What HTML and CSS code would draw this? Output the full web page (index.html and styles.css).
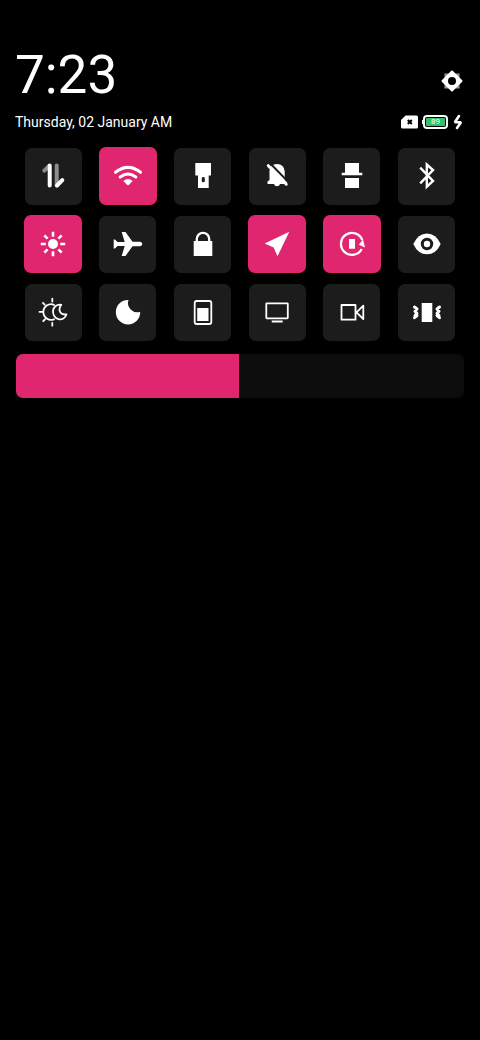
FILE: index.html
```html
<!DOCTYPE html>
<html lang="en">
<head>
<meta charset="utf-8">
<meta name="viewport" content="width=device-width, initial-scale=1">
<title>Control center</title>
<link rel="stylesheet" href="styles.css">
</head>
<body>
<main class="panel">
  <header class="header">
    <div class="row">
      <time class="clock">7:23</time>
      <button class="settings" type="button" aria-label="Settings">
        <svg viewBox="-11 -11 22 22"><path class="dim" d="M-7.500-7.500h15v15h-15z"/><path class="solid round" d="M0-9.500 9.500 0 0 9.500-9.500 0z"/><circle class="hole" r="4"/></svg>
      </button>
    </div>
    <div class="row">
      <span class="date">Thursday, 02 January AM</span>
      <div class="status">
        <svg class="sim" viewBox="0 0 17 14" role="img" aria-label="No SIM"><path class="solid" d="M4.500 0.500H15.500Q17 .5 17 2V12Q17 13.500 15.500 13.500H1.500Q0 13.500 0 12V5z"/><path class="cross" d="m6.800 5 4 4m0-4-4 4"/></svg>
        <span class="battery"><span class="charge">89</span></span>
        <svg class="bolt" viewBox="0 0 10 16" role="img" aria-label="Charging"><path d="M6 2 1.800 8.300H8L4 14"/></svg>
      </div>
    </div>
  </header>

  <section class="tiles" aria-label="Quick settings">
    <button class="tile" type="button" aria-label="Mobile data"><svg viewBox="-20 -20 40 40"><path class="line thick faded" d="M-8.700-5.300-4-10M3.700-10.500V9.500"/><path class="line thick" d="M-3.300-10.500V9.500M4 9.500 9.300 4.200"/></svg></button>
    <button class="tile on" type="button" aria-pressed="true" aria-label="Wi-Fi"><svg viewBox="-20 -20 40 40"><path class="line wifi" d="M-12.500-3.700Q0-13.500 12.500-3.700M-7.800 1Q0-5 7.800 1"/><path class="solid" d="M-4.700 5Q0 1 4.700 5L.7 9Q0 9.500-.7 9z"/></svg></button>
    <button class="tile" type="button" aria-label="Flashlight"><svg viewBox="-20 -20 40 40"><path class="solid" fill-rule="evenodd" d="M-7.700-13H8V-.5H5.700V12H-5V-.5H-7.700zM-1.200 2V5Q-1.200 6.300.3 6.300T1.800 5V2Q1.800 1 .3 1T-1.200 2z"/></svg></button>
    <button class="tile" type="button" aria-label="Silent mode"><svg viewBox="-20 -20 40 40"><path class="solid" d="M-7.500 4V-5Q-7-12 0-12T7.700-4.500V4L10 6V8H3Q2.500 10.200 0 10.200T-3 8H-9.500V5.500z"/><path class="cut" d="M-6.500-12.200 12 6.600"/><path class="line bar" d="M-8.700-10.300 9.300 8.200"/></svg></button>
    <button class="tile" type="button" aria-label="Incognito"><svg viewBox="-20 -20 40 40"><path class="solid" d="M-7-13H7V-3.300H10.300V-.7H-10.300V-3.300H-7zM-7 2H7V12H-7z"/></svg></button>
    <button class="tile" type="button" aria-label="Bluetooth"><svg viewBox="-20 -20 40 40"><path class="line sharp" d="M-6.800-8.300 6 5-.2 10.700V-11.500L6-6-6.800 7.300"/></svg></button>

    <button class="tile on" type="button" aria-pressed="true" aria-label="Auto brightness"><svg viewBox="-20 -20 40 40"><circle class="solid" r="5"/><path class="rays" d="M0-12.200V-7.200M0 7.200V12.200M-12.200 0H-7.200M7.200 0H12.200M-8.700-8.700-5.400-5.400M8.700-8.700 5.400-5.400M-8.700 8.700-5.400 5.400M8.700 8.700 5.400 5.400"/></svg></button>
    <button class="tile" type="button" aria-label="Airplane mode"><svg viewBox="-20 -20 40 40"><path class="solid" d="M-14.300-4.500H-13L-10.500-2H-3.300L-6.300-12H-2.500L4.500-2.300H12Q14.300-2 14.300 0T12 2.300H4.500L-2.500 12H-6.300L-3.300 2H-10.500L-13 4.500H-14.300z"/></svg></button>
    <button class="tile" type="button" aria-label="Lock screen"><svg viewBox="-20 -20 40 40"><path class="solid" d="M-9.300-3H9.300V12H-9.300z"/><path class="line medium" d="M-6.200-3V-5A6.200 6.200 0 0 1 6.200-5V-3"/></svg></button>
    <button class="tile on" type="button" aria-pressed="true" aria-label="Location"><svg viewBox="-20 -20 40 40"><path class="solid" d="M12.300-12.300.5 12.300-3.300 3.500-12.300-.5z"/></svg></button>
    <button class="tile on" type="button" aria-pressed="true" aria-label="Auto rotate"><svg viewBox="-20 -20 40 40"><path class="line medium" d="M9.700 5A11 11 0 1 1 10.300-4"/><path class="solid" d="M-3-5H3V4.700H-3zM6.800.8 11-4.500 13 3.500z"/></svg></button>
    <button class="tile" type="button" aria-label="Reading mode"><svg viewBox="-20 -20 40 40"><path class="solid" d="M-13.700 0Q-9-10.500 0-10.500T13.700 0Q9 10.300 0 10.300T-13.700 0z"/><circle class="iris" r="4.700"/></svg></button>

    <button class="tile" type="button" aria-label="Dark mode"><svg viewBox="-20 -20 40 40"><path class="line sky" d="M-.7-13.300V-10.500M-13.500-.2H-10.800M-.7 11V13.700M-10-9-8.300-7.300M-9.700 9-8 7.300M1-7.200A7.800 7.800 0 1 0 1 7.300M8.300-7.200C-2-8.500-2.500 5 5.500 7.200 9.500 8 12.500 5.500 13.500 2.300 7 3.500 4.500-2 8.300-7.200z"/></svg></button>
    <button class="tile" type="button" aria-label="Do not disturb"><svg viewBox="-20 -20 40 40"><path class="solid" d="M.5-12A9.300 9.300 0 0 0 12.200-.2A12.200 12.200 0 1 1 .5-12z"/></svg></button>
    <button class="tile" type="button" aria-label="One-handed mode"><svg viewBox="-20 -20 40 40"><rect class="line frame" x="-8.300" y="-11" width="16.600" height="23" rx="2"/><path class="solid" d="M-5.800-4H5.500V9H-5.800z"/></svg></button>
    <button class="tile" type="button" aria-label="Cast"><svg viewBox="-20 -20 40 40"><rect class="line frame" x="-10.700" y="-8.700" width="21.500" height="15" rx=".5"/><path class="solid" d="M-5.300 8.500H5.700V10.500H-5.300z"/></svg></button>
    <button class="tile" type="button" aria-label="Screen recorder"><svg viewBox="-20 -20 40 40"><path class="line frame" d="M-10.500-7H3.500V7.700H-10.500zM4.500.4 11.300-6.300V7z"/></svg></button>
    <button class="tile" type="button" aria-label="Vibrate"><svg viewBox="-20 -20 40 40"><path class="solid" d="M-5.300-9H5.300V10H-5.300z"/><path class="line shake" d="M-12.500-5-10-3-12-.7-10 1.500-12 3.500M-10 3.500-12.500 5.700M12.500-5 10-3 12-.7 10 1.500 12 3.500M10 3.500 12.500 5.700"/></svg></button>
  </section>

  <input class="brightness" type="range" min="0" max="100" step="0.1" value="49.8" aria-label="Brightness" style="--level: 49.8%">
</main>
</body>
</html>
```
FILE: styles.css
```css
* { box-sizing: border-box; }

body {
  margin: 0;
  background: #000;
  color: #fff;
  font-family: Roboto, sans-serif;
}

.panel {
  --pink: #df266f;
  --tile: #1c1c1c;
  padding: 44px 16px 16px;
}

button {
  padding: 0;
  border: 0;
  background: none;
  color: inherit;
}

svg { display: block; }

.header { margin: 0 1px 14px -1px; }

.row {
  display: flex;
  justify-content: space-between;
  align-items: center;
}

.clock {
  font-size: 53px;
  line-height: 62px;
}

.settings {
  margin-top: 12px;
  width: 22px;
  height: 22px;
}

.date {
  margin-top: 5px;
  font-size: 14px;
  line-height: 22px;
}

.status {
  display: flex;
  align-items: center;
  gap: 5px;
  margin-top: 4px;
}

.sim { width: 17px; height: 14px; }
.bolt { width: 10px; height: 16px; }

.battery {
  position: relative;
  width: 25px;
  height: 14px;
  padding: 1px;
  border: 2px solid #fff;
  border-radius: 4px;
}

.battery::before {
  content: "";
  position: absolute;
  left: -3px;
  top: 3px;
  width: 2px;
  height: 4px;
  background: #fff;
}

.charge {
  display: block;
  height: 8px;
  border-radius: 1px;
  background: #2fc36b;
  font-size: 8px;
  line-height: 8px;
  text-align: center;
}

.tiles {
  display: grid;
  grid-template-columns: repeat(6, 1fr);
  grid-auto-rows: 58px;
  row-gap: 10px;
  place-items: center;
}

.tile {
  display: grid;
  place-items: center;
  width: 57px;
  height: 57px;
  border-radius: 7px;
  background: var(--tile);
}

.tile.on {
  width: 58px;
  height: 58px;
  background: var(--pink);
}

.tile svg { width: 40px; height: 40px; }

.solid { fill: #fff; }
.round { stroke: #fff; stroke-width: 2; stroke-linejoin: round; }
.dim { fill: #999; }
.hole { fill: #000; }
.cross { stroke: #000; stroke-width: 2; }
.line { fill: none; stroke: #fff; stroke-width: 2; stroke-linecap: round; stroke-linejoin: round; }
.thick { stroke-width: 4; }
.faded { stroke: #8c8c8c; }
.wifi { stroke-width: 3; }
.bar { stroke-width: 3; }
.medium { stroke-width: 2.3; stroke-linecap: butt; }
.sky { stroke-width: 1.8; }
.frame { stroke-width: 1.8; }
.sharp { stroke-width: 2.4; stroke-linecap: butt; stroke-linejoin: miter; }
.shake { stroke-width: 3; }
.rays { stroke: #fff; stroke-width: 2.6; }
.cut { stroke: var(--tile); stroke-width: 2; }
.iris { fill: #fff; stroke: var(--tile); stroke-width: 3; }
.bolt path { fill: none; stroke: #fff; stroke-width: 2.6; stroke-linejoin: bevel; stroke-linecap: round; }

.brightness {
  display: block;
  appearance: none;
  width: 100%;
  height: 44px;
  margin: 13px 0 0;
  border-radius: 7px;
  background: linear-gradient(to right, var(--pink) var(--level), #0c0c0c var(--level));
}

.brightness::-webkit-slider-thumb {
  appearance: none;
  width: 1px;
  height: 44px;
  background: transparent;
}
```
